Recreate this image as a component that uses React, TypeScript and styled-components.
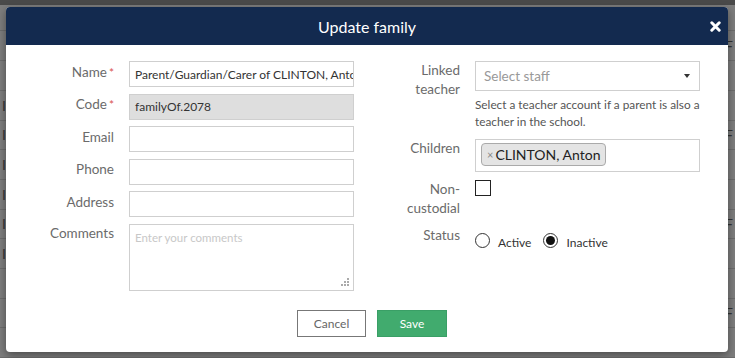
import * as React from 'react';
import styled, { createGlobalStyle } from 'styled-components';

const GlobalStyle = createGlobalStyle`
  html, body {
    margin: 0;
    padding: 0;
    background: #7b7b7b;
    font-family: Lato, "Open Sans", sans-serif;
  }
`;

const Screen = styled.div`
  position: relative;
  width: 735px;
  height: 358px;
  overflow: hidden;
  background: #7d7d7d;
`;

// faint page under the backdrop
const Page = styled.div`
  display: flex;
  flex-direction: column;
  height: 100%;
`;

const TopBar = styled.div`
  height: 5px;
  background: #4a4a4a;
`;

const PageRow = styled.div<{ $h: number }>`
  height: ${(p) => p.$h}px;
  border-bottom: 1px solid #6c6c6c;
  display: flex;
  justify-content: space-between;
  align-items: center;
  padding: 0 2px;
  color: #333;
  font-size: 14px;
`;

const Modal = styled.div`
  position: absolute;
  left: 6px;
  top: 7px;
  width: 722px;
  height: 345px;
  background: #fff;
  border-radius: 4px;
  overflow: hidden;
  box-shadow: 0 3px 9px rgba(0, 0, 0, 0.4);
  display: flex;
  flex-direction: column;
`;

const Header = styled.div`
  position: relative;
  height: 38px;
  background: #132a4f;
  color: #fff;
  display: flex;
  align-items: center;
  justify-content: center;
  font-size: 16px;
`;

const Close = styled.span`
  position: absolute;
  right: 7px;
  top: 14px;
  display: flex;
`;

const Body = styled.div`
  display: flex;
  padding: 16px 28px 0 0;
`;

const Column = styled.div<{ $label: number; $gap: number }>`
  display: grid;
  grid-template-columns: ${(p) => p.$label}px 225px;
  column-gap: ${(p) => p.$gap}px;
  align-content: start;
`;

const Label = styled.label<{ $top?: number; $mb?: number; $span?: number }>`
  text-align: right;
  color: #6b6b6b;
  font-size: 13.5px;
  line-height: 19px;
  padding-top: ${(p) => p.$top ?? 1.5}px;
  margin-bottom: ${(p) => p.$mb ?? 6.5}px;
  grid-row: span ${(p) => p.$span ?? 1};
`;

const Req = styled.span`
  color: #d9534f;
  font-size: 12px;
  vertical-align: top;
  margin-left: 2px;
`;

const Input = styled.div<{ $disabled?: boolean }>`
  height: 26px;
  box-sizing: border-box;
  border: 1px solid #cfcfcf;
  background: ${(p) => (p.$disabled ? '#dedede' : '#fff')};
  color: #333;
  font-size: 12px;
  padding: 0 5px;
  display: flex;
  align-items: center;
  white-space: nowrap;
  overflow: hidden;
  margin-bottom: 6.5px;
`;

const TextArea = styled.div`
  position: relative;
  height: 67px;
  box-sizing: border-box;
  border: 1px solid #cfcfcf;
  color: #c8c8c8;
  font-size: 11.5px;
  padding: 6px 5px;
`;

const Grip = styled.svg`
  position: absolute;
  right: 3px;
  bottom: 3px;
`;

const Select = styled.div`
  height: 30px;
  box-sizing: border-box;
  border: 1px solid #cfcfcf;
  display: flex;
  align-items: center;
  justify-content: space-between;
  padding: 0 9px 0 8px;
  color: #999;
  font-size: 13.5px;
`;

const Caret = styled.span`
  width: 0;
  height: 0;
  border-left: 3.5px solid transparent;
  border-right: 3.5px solid transparent;
  border-top: 4px solid #333;
`;

const Help = styled.div`
  color: #555;
  font-size: 11.8px;
  line-height: 17px;
  padding-top: 5px;
  margin-bottom: 9px;
`;

const Chips = styled.div`
  height: 33px;
  box-sizing: border-box;
  border: 1px solid #cfcfcf;
  padding: 3px 5px;
  margin-bottom: 8px;
  display: flex;
  align-items: flex-start;
`;

const Chip = styled.span`
  height: 23px;
  box-sizing: border-box;
  background: #e4e4e4;
  border: 1px solid #aaa;
  border-radius: 4px;
  padding: 0 5px 0 5px;
  display: flex;
  align-items: center;
  color: #222;
  font-size: 14px;
  gap: 2px;
`;

const ChipX = styled.span`
  color: #888;
  font-size: 11px;
`;

const Checkbox = styled.span`
  display: block;
  width: 16px;
  height: 16px;
  box-sizing: border-box;
  border: 1px solid #222;
`;

const RadioGroup = styled.div`
  display: flex;
  align-items: center;
  gap: 8px;
  padding-top: 3px;
`;

const RadioItem = styled.span`
  display: flex;
  align-items: center;
  gap: 8px;
  color: #333;
  font-size: 12px;
  margin-right: 4px;
`;

const RadioText = styled.span`
  padding-top: 5px;
`;

const Radio = styled.span<{ $checked?: boolean }>`
  width: 15px;
  height: 15px;
  box-sizing: border-box;
  border-radius: 50%;
  border: 1px solid #333;
  display: flex;
  align-items: center;
  justify-content: center;
  &::after {
    content: '';
    display: ${(p) => (p.$checked ? 'block' : 'none')};
    width: 9px;
    height: 9px;
    border-radius: 50%;
    background: #111;
  }
`;

const Footer = styled.div`
  display: flex;
  justify-content: center;
  gap: 11px;
  padding: 19px 0 0 10px;
`;

const Button = styled.button<{ $primary?: boolean }>`
  height: 27px;
  width: ${(p) => (p.$primary ? 70 : 69)}px;
  box-sizing: border-box;
  border: 1px solid ${(p) => (p.$primary ? '#3a9f66' : '#777')};
  background: ${(p) => (p.$primary ? '#41ab6e' : '#fff')};
  color: ${(p) => (p.$primary ? '#fff' : '#666')};
  font-family: Lato, sans-serif;
  font-size: 12px;
  padding: 0;
`;

const rows = [27, 32, 31, 31, 31, 31, 31, 31, 31, 31, 31, 31];

export default function App() {
  return (
    <Screen>
      <GlobalStyle />
      <Page>
        <TopBar />
        {rows.map((h, i) => (
          <PageRow key={i} $h={h}>
            <span>{i > 2 && i < 9 ? 'I' : ''}</span>
            <span>{i % 3 === 1 ? 'F' : ''}</span>
          </PageRow>
        ))}
      </Page>
      <Modal>
        <Header>
          Update family
          <Close>
            <svg width="11" height="11" viewBox="0 0 11 11">
              <path d="M1.8 1.8 L9.2 9.2 M9.2 1.8 L1.8 9.2" stroke="#fff" strokeWidth="3" strokeLinecap="round" />
            </svg>
          </Close>
        </Header>
        <Body>
          <Column $label={108} $gap={15} style={{ width: 348 }}>
            <Label>
              Name<Req>*</Req>
            </Label>
            <Input>Parent/Guardian/Carer of CLINTON, Anton</Input>
            <Label>
              Code<Req>*</Req>
            </Label>
            <Input $disabled>familyOf.2078</Input>
            <Label>Email</Label>
            <Input />
            <Label>Phone</Label>
            <Input />
            <Label>Address</Label>
            <Input />
            <Label $top={0}>Comments</Label>
            <TextArea>
              Enter your comments
              <Grip width="9" height="9" viewBox="0 0 9 9">
                <g fill="#aaa">
                  <rect x="6" y="0" width="2" height="2" />
                  <rect x="3" y="3" width="2" height="2" />
                  <rect x="6" y="3" width="2" height="2" />
                  <rect x="0" y="6" width="2" height="2" />
                  <rect x="3" y="6" width="2" height="2" />
                  <rect x="6" y="6" width="2" height="2" />
                </g>
              </Grip>
            </TextArea>
          </Column>
          <Column $label={106} $gap={15}>
            <Label $top={0} $mb={0} $span={2}>
              Linked
              <br />
              teacher
            </Label>
            <Select>
              Select staff
              <Caret />
            </Select>
            <Help>Select a teacher account if a parent is also a teacher in the school.</Help>
            <Label $top={0}>Children</Label>
            <Chips>
              <Chip>
                <ChipX>×</ChipX>CLINTON, Anton
              </Chip>
            </Chips>
            <Label $top={0} $mb={8}>
              Non-
              <br />
              custodial
            </Label>
            <div>
              <Checkbox />
            </div>
            <Label $top={0}>Status</Label>
            <RadioGroup>
              <RadioItem>
                <Radio />
                <RadioText>Active</RadioText>
              </RadioItem>
              <RadioItem>
                <Radio $checked />
                <RadioText>Inactive</RadioText>
              </RadioItem>
            </RadioGroup>
          </Column>
        </Body>
        <Footer>
          <Button>Cancel</Button>
          <Button $primary>Save</Button>
        </Footer>
      </Modal>
    </Screen>
  );
}
